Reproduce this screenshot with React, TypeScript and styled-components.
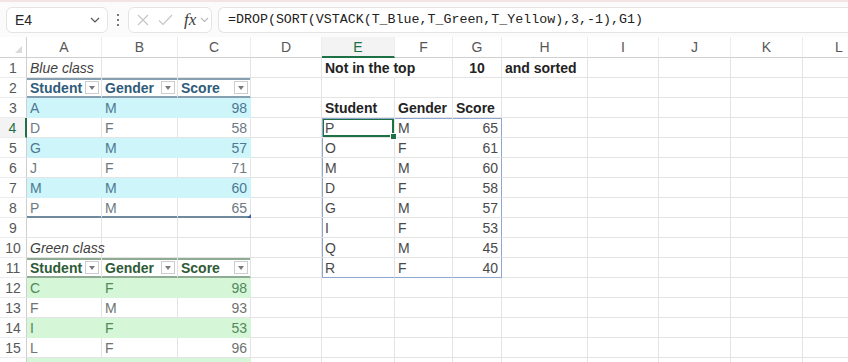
import React from 'react';
import styled, { createGlobalStyle } from 'styled-components';

const GlobalStyle = createGlobalStyle`
  html, body {
    margin: 0;
    padding: 0;
    background: #ffffff;
  }
  body {
    font-family: "Liberation Sans", Arial, sans-serif;
    overflow: hidden;
  }
`;

const COLS = ['A', 'B', 'C', 'D', 'E', 'F', 'G', 'H', 'I', 'J', 'K', 'L'];
const WIDTHS = [75, 76, 73, 71, 73, 58, 49, 86, 71, 72, 72, 73];
const ROW_HEAD = 27;
const ROW_COUNT = 16;
// last row only peeks in at the bottom edge, its number stays below the fold
const LABELLED_ROWS = 15;
const GRID = '#e4e4e4';
const HEAD_LINE = '#cfcfcf';
const SPILL = '#8fa8cf';
const SELECT = '#1e7145';
const TEMPLATE = `${ROW_HEAD}px ${WIDTHS.map(w => `${w}px`).join(' ')}`;

type Spec = {
    text?: string;
    align?: 'left' | 'right' | 'center';
    bold?: boolean;
    italic?: boolean;
    color?: string;
    bg?: string;
    filter?: boolean;
    lineTop?: string;
    lineBottom?: string;
    noRight?: boolean;
    spillL?: boolean;
    spillR?: boolean;
    spillT?: boolean;
    spillB?: boolean;
    selected?: boolean;
    resize?: boolean;
};

const cells: Record<string, Spec> = {};
const put = (ref: string, spec: Spec) => {
    cells[ref] = {...cells[ref], ...spec};
};

type Theme = { head: string; line: string; end: string; band: string; bandText: string; text: string };

const BLUE: Theme = {
    head: '#2f5c7a', line: '#86a0b1', end: '#6f8a9c',
    band: '#cdf5fa', bandText: '#4d7993', text: '#6e7a82',
};
const GREEN: Theme = {
    head: '#2e5b36', line: '#8fab94', end: '#769a7c',
    band: '#d5f6d7', bandText: '#52895b', text: '#6e7470',
};

const addTable = (start: number, title: string, theme: Theme, data: string[][], last?: number) => {
    put(`A${start}`, {text: title, italic: true, color: '#3f3f3f'});
    const head = start + 1;
    ['Student', 'Gender', 'Score'].forEach((t, i) =>
        put(`${COLS[i]}${head}`, {
            text: t, bold: true, color: theme.head, filter: true,
            lineTop: theme.line, lineBottom: theme.line,
        }));
    data.forEach((row, k) => {
        const r = head + 1 + k;
        const band = k % 2 === 0;
        row.forEach((v, i) => put(`${COLS[i]}${r}`, {
            text: v,
            align: i === 2 ? 'right' : 'left',
            color: band ? theme.bandText : theme.text,
            bg: band ? theme.band : undefined,
        }));
    });
    if (last) {
        ['A', 'B', 'C'].forEach(c => put(`${c}${last}`, {lineBottom: theme.end}));
        put(`C${last}`, {resize: true});
    }
};

addTable(1, 'Blue class', BLUE, [
    ['A', 'M', '98'], ['D', 'F', '58'], ['G', 'M', '57'],
    ['J', 'F', '71'], ['M', 'M', '60'], ['P', 'M', '65'],
], 8);

addTable(10, 'Green class', GREEN, [
    ['C', 'F', '98'], ['F', 'M', '93'], ['I', 'F', '53'],
    ['L', 'F', '96'], ['', '', ''],
]);

put('E1', {text: 'Not in the top', bold: true, color: '#232323', noRight: true});
put('G1', {text: '10', bold: true, color: '#232323', align: 'center'});
put('H1', {text: 'and sorted', bold: true, color: '#232323'});
['Student', 'Gender', 'Score'].forEach((t, i) =>
    put(`${COLS[4 + i]}3`, {text: t, bold: true, color: '#232323'}));

const result = [
    ['P', 'M', '65'], ['O', 'F', '61'], ['M', 'M', '60'], ['D', 'F', '58'],
    ['G', 'M', '57'], ['I', 'F', '53'], ['Q', 'M', '45'], ['R', 'F', '40'],
];
result.forEach((row, k) => {
    const r = 4 + k;
    row.forEach((v, i) => put(`${COLS[4 + i]}${r}`, {
        text: v,
        align: i === 2 ? 'right' : 'left',
        color: '#4a4a4a',
        spillL: i === 0,
        spillR: i === 2,
        spillT: k === 0,
        spillB: k === result.length - 1,
    }));
});
put('E4', {selected: true});

// ---------- toolbar ----------

const Page = styled.div`
    width: 848px;
    height: 362px;
    overflow: hidden;
    display: flex;
    flex-direction: column;
    border-top: 2px solid #f5e4e4;
    box-sizing: border-box;
`;

const Toolbar = styled.div`
    height: 35px;
    flex: none;
    display: flex;
    align-items: center;
    padding: 0 0 0 6px;
    background: #fbfbfb;
    box-sizing: border-box;
`;

const Box = styled.div<{ $width?: number }>`
    height: 26px;
    box-sizing: border-box;
    border: 1px solid #e4e4e4;
    border-radius: 6px;
    background: #ffffff;
    display: flex;
    align-items: center;
    flex: ${p => (p.$width ? 'none' : '1')};
    width: ${p => (p.$width ? `${p.$width}px` : 'auto')};
`;

const NameBox = styled(Box)`
    justify-content: space-between;
    padding: 0 7px 0 8px;
    font-size: 14px;
    color: #262626;
`;

const Dots = styled.div`
    width: 20px;
    display: flex;
    flex-direction: column;
    align-items: center;
    gap: 3px;

    span {
        width: 2px;
        height: 2px;
        border-radius: 50%;
        background: #4a4a4a;
    }
`;

const FuncBox = styled(Box)`
    padding: 0 0 0 8px;
    gap: 9px;
`;

const Fx = styled.span`
    font-family: "Liberation Serif", "Times New Roman", serif;
    font-style: italic;
    font-size: 17px;
    color: #3c3c3c;
    margin-left: 2px;
    margin-right: -5px;
`;

const FormulaBox = styled(Box)`
    margin-left: 6px;
    border-right: none;
    border-radius: 6px 0 0 6px;
    padding-left: 9px;
    font-family: "Liberation Mono", "Courier New", monospace;
    font-size: 13.3px;
    color: #222222;
    white-space: nowrap;
`;

const Chevron = ({color = '#555', w = 10}: { color?: string; w?: number }) => (
    <svg width={w} height={w * 0.6} viewBox="0 0 10 6">
        <polyline points="1,1 5,5 9,1" fill="none" stroke={color} strokeWidth="1.2"/>
    </svg>
);

// ---------- sheet ----------

const Sheet = styled.div`
    display: grid;
    grid-template-columns: ${TEMPLATE};
    grid-template-rows: 21px repeat(${ROW_COUNT}, 20px);
    background: #ffffff;
`;

const Corner = styled.div`
    position: relative;
    box-sizing: border-box;
    border-right: 1px solid ${HEAD_LINE};
    border-bottom: 1px solid ${HEAD_LINE};

    svg {
        position: absolute;
        right: 4px;
        bottom: 4px;
    }
`;

const ColHead = styled.div<{ $active?: boolean }>`
    box-sizing: border-box;
    display: flex;
    align-items: center;
    justify-content: center;
    font-size: 14px;
    color: ${p => (p.$active ? SELECT : '#575757')};
    border-right: 1px solid #ececec;
    border-bottom: ${p => (p.$active ? `2px solid ${SELECT}` : `1px solid ${HEAD_LINE}`)};
    background: ${p => (p.$active ? '#f3f3f3' : '#ffffff')};
`;

const RowHead = styled.div<{ $active?: boolean }>`
    box-sizing: border-box;
    display: flex;
    align-items: center;
    justify-content: center;
    font-size: 14px;
    color: ${p => (p.$active ? SELECT : '#575757')};
    border-right: ${p => (p.$active ? `2px solid ${SELECT}` : `1px solid ${HEAD_LINE}`)};
    border-bottom: 1px solid #ececec;
    background: ${p => (p.$active ? '#f3f3f3' : '#ffffff')};
`;

type CellProps = {
    $align?: Spec['align'];
    $bold?: boolean;
    $italic?: boolean;
    $color?: string;
    $bg?: string;
    $lineTop?: string;
    $lineBottom?: string;
    $noRight?: boolean;
    $spillL?: boolean;
    $spillR?: boolean;
    $spillT?: boolean;
    $spillB?: boolean;
    $selected?: boolean;
};

const shadows = (p: CellProps) => {
    const list: string[] = [];
    if (p.$lineTop) list.push(`inset 0 2px 0 ${p.$lineTop}`);
    if (p.$lineBottom) list.push(`inset 0 -1px 0 ${p.$lineBottom}`);
    if (p.$spillL) list.push(`inset 1px 0 0 ${SPILL}`);
    if (p.$spillT) list.push(`inset 0 1px 0 ${SPILL}`);
    if (p.$selected) list.push(`inset 0 0 0 2px ${SELECT}`);
    return list.length ? list.join(', ') : 'none';
};

const Cell = styled.div<CellProps>`
    position: relative;
    box-sizing: border-box;
    display: flex;
    align-items: center;
    justify-content: ${p => (p.$align === 'right' ? 'flex-end' : p.$align === 'center' ? 'center' : 'space-between')};
    padding: 0 3px;
    font-size: 14px;
    white-space: nowrap;
    color: ${p => p.$color ?? '#333333'};
    font-weight: ${p => (p.$bold ? 700 : 400)};
    font-style: ${p => (p.$italic ? 'italic' : 'normal')};
    background: ${p => p.$bg ?? 'transparent'};
    border-right: 1px solid ${p => (p.$spillR ? SPILL : p.$noRight ? 'transparent' : p.$bg ?? GRID)};
    border-bottom: 1px solid ${p => p.$lineBottom ?? (p.$spillB ? SPILL : p.$bg ?? GRID)};
    box-shadow: ${p => shadows(p)};
`;

const FilterBtn = styled.span`
    width: 14px;
    height: 13px;
    box-sizing: border-box;
    border: 1px solid #cdcdcd;
    background: #ffffff;
    display: flex;
    align-items: center;
    justify-content: center;
    margin-right: -1px;
    flex: none;
`;

const FillHandle = styled.span`
    position: absolute;
    right: -3px;
    bottom: -3px;
    width: 5px;
    height: 5px;
    background: ${SELECT};
    border: 1px solid #ffffff;
    z-index: 2;
`;

const ResizeMark = styled.span`
    position: absolute;
    right: -1px;
    bottom: -1px;
    width: 0;
    height: 0;
    border-left: 4px solid transparent;
    border-bottom: 4px solid #3464a4;
    z-index: 2;
`;

const SheetCell = ({spec}: { spec?: Spec }) => {
    const s = spec ?? {};
    return (
        <Cell
            $align={s.align}
            $bold={s.bold}
            $italic={s.italic}
            $color={s.color}
            $bg={s.bg}
            $lineTop={s.lineTop}
            $lineBottom={s.lineBottom}
            $noRight={s.noRight}
            $spillL={s.spillL}
            $spillR={s.spillR}
            $spillT={s.spillT}
            $spillB={s.spillB}
            $selected={s.selected}
        >
            {s.text && <span>{s.text}</span>}
            {s.filter && (
                <FilterBtn>
                    <svg width="6" height="4" viewBox="0 0 6 4">
                        <polygon points="0,0 6,0 3,4" fill="#7a7a7a"/>
                    </svg>
                </FilterBtn>
            )}
            {s.selected && <FillHandle/>}
            {s.resize && <ResizeMark/>}
        </Cell>
    );
};

const App: React.FC = () => {
    const rows = Array.from({length: ROW_COUNT}, (_, i) => i + 1);
    return (
        <>
            <GlobalStyle/>
            <Page>
                <Toolbar>
                    <NameBox $width={102}>
                        <span>E4</span>
                        <Chevron/>
                    </NameBox>
                    <Dots><span/><span/><span/></Dots>
                    <FuncBox $width={84}>
                        <svg width="12" height="12" viewBox="0 0 12 12">
                            <path d="M1 1 L11 11 M11 1 L1 11" stroke="#c6c6c6" strokeWidth="1.2" fill="none"/>
                        </svg>
                        <svg width="15" height="12" viewBox="0 0 15 12">
                            <polyline points="1,6.5 5,10.5 14,1" stroke="#c6c6c6" strokeWidth="1.2" fill="none"/>
                        </svg>
                        <Fx>fx</Fx>
                        <Chevron color="#b5b5b5" w={9}/>
                    </FuncBox>
                    <FormulaBox>=DROP(SORT(VSTACK(T_Blue,T_Green,T_Yellow),3,-1),G1)</FormulaBox>
                </Toolbar>
                <Sheet>
                    <Corner>
                        <svg width="7" height="7" viewBox="0 0 7 7">
                            <polygon points="7,0 7,7 0,7" fill="#dadada"/>
                        </svg>
                    </Corner>
                    {COLS.map(c => (
                        <ColHead key={c} $active={c === 'E'}>{c}</ColHead>
                    ))}
                    {rows.map(r => (
                        <React.Fragment key={r}>
                            <RowHead $active={r === 4}>{r <= LABELLED_ROWS ? r : ''}</RowHead>
                            {COLS.map(c => (
                                <SheetCell key={c + r} spec={cells[`${c}${r}`]}/>
                            ))}
                        </React.Fragment>
                    ))}
                </Sheet>
            </Page>
        </>
    );
};

export default App;
